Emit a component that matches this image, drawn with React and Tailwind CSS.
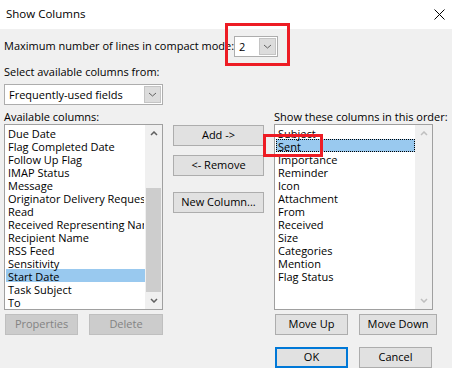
import React from "react";

const FONT = { fontFamily: "'Open Sans', 'Noto Sans', sans-serif" };

function Chevron({ dir = "down", color = "#606060", w = 8, h = 5, sw = 1.5 }) {
  const d = dir === "up" ? `M1 ${h - 1} L${w / 2} 1 L${w - 1} ${h - 1}` : `M1 1 L${w / 2} ${h - 1} L${w - 1} 1`;
  return (
    <svg width={w} height={h} viewBox={`0 0 ${w} ${h}`} fill="none">
      <path d={d} stroke={color} strokeWidth={sw} />
    </svg>
  );
}

function Combo({ text, className }) {
  return (
    <div className={`flex items-center bg-white border border-[#adadad] h-[21px] p-[1px] ${className}`}>
      <span className="flex-1 pl-[3px] leading-[17px] whitespace-nowrap overflow-x-clip">{text}</span>
      <div className="w-[17px] h-[17px] bg-[#dcdcdc] border border-[#c4c4c4] flex items-center justify-center">
        <Chevron dir="down" w={9} h={5} sw={1} />
      </div>
    </div>
  );
}

function Btn({ children, className = "", disabled = false, primary = false }) {
  const cls = disabled
    ? "bg-[#cccccc] border border-[#bfbfbf] text-[#838383]"
    : primary
    ? "bg-[#e1e1e1] border-2 border-[#0078d7] text-black"
    : "bg-[#e1e1e1] border border-[#adadad] text-black";
  return (
    <div className={`h-[21px] flex items-center justify-center whitespace-nowrap ${cls} ${className}`}>
      {children}
    </div>
  );
}

function ListBox({ items, selected, focused, scroll }) {
  return (
    <div className="w-[159px] h-[186px] bg-white border border-[#a0a0a0] flex">
      <div className="flex-1 pt-[1px] pl-[1px] overflow-hidden">
        {items.map((it, i) => (
          <div
            key={it}
            className={`h-[13px] leading-[13px] pl-[1px] whitespace-nowrap overflow-x-clip border ${
              i === selected ? "bg-[#99c9ef]" : ""
            } ${i === selected && focused ? "border-dotted border-black" : "border-transparent"}`}
          >
            {it}
          </div>
        ))}
      </div>
      <div className="w-[17px] bg-[#f0f0f0] flex flex-col">
        <div className="h-[17px] flex items-center justify-center">
          <Chevron dir="up" color={scroll ? "#606060" : "#bfbfbf"} />
        </div>
        <div className="flex-1 flex flex-col justify-end">
          {scroll && <div className="h-[104px] mx-[1px] bg-[#cdcdcd]" />}
        </div>
        <div className="h-[17px] flex items-center justify-center">
          <Chevron dir="down" color={scroll ? "#606060" : "#bfbfbf"} />
        </div>
      </div>
    </div>
  );
}

const LEFT = [
  "Due Date",
  "Flag Completed Date",
  "Follow Up Flag",
  "IMAP Status",
  "Message",
  "Originator Delivery Requested",
  "Read",
  "Received Representing Name",
  "Recipient Name",
  "RSS Feed",
  "Sensitivity",
  "Start Date",
  "Task Subject",
  "To",
];

const RIGHT = [
  "Subject",
  "Sent",
  "Importance",
  "Reminder",
  "Icon",
  "Attachment",
  "From",
  "Received",
  "Size",
  "Categories",
  "Mention",
  "Flag Status",
];

export default function App() {
  return (
    <div className="relative w-[452px] h-[368px] overflow-hidden bg-[#f0f0f0] text-[11px] text-black" style={FONT}>
      <div className="h-[29px] bg-white flex items-center justify-between pl-[6px] pr-[7px] pb-[1px]">
        <span className="text-[11.5px]">Show Columns</span>
        <svg width="11" height="11" viewBox="0 0 11 11" fill="none">
          <path d="M0.5 0.5 L10.5 10.5 M10.5 0.5 L0.5 10.5" stroke="#000" strokeWidth="1" />
        </svg>
      </div>

      <div className="px-[4px]">
        <div className="flex items-center mt-[7px] h-[21px]">
          <span className="w-[230px] whitespace-nowrap">Maximum number of lines in compact mode:</span>
          <Combo text="2" className="w-[44px]" />
        </div>

        <div className="mt-[7px] h-[15px] leading-[15px]">Select available columns from:</div>

        <Combo text="Frequently-used fields" className="w-[159px] mt-[5px]" />

        <div className="flex mt-[4px]">
          <div className="w-[159px] flex flex-col">
            <div className="h-[15px] leading-[15px]">Available columns:</div>
            <ListBox items={LEFT} selected={11} scroll />
            <div className="flex justify-between mt-[4px] pl-[1px]">
              <Btn disabled className="w-[73px]">Properties</Btn>
              <Btn disabled className="w-[74px]">Delete</Btn>
            </div>
          </div>

          <div className="w-[91px] ml-[10px] flex flex-col pt-[16px]">
            <Btn>Add -&gt;</Btn>
            <Btn className="mt-[9px]">&lt;- Remove</Btn>
            <Btn className="mt-[16px]">New Column...</Btn>
          </div>

          <div className="w-[163px] ml-[10px] flex flex-col">
            <div className="h-[15px] leading-[15px] whitespace-nowrap">Show these columns in this order:</div>
            <ListBox items={RIGHT} selected={1} focused />
            <div className="flex justify-between mt-[4px] pl-[1px]">
              <Btn className="w-[73px]">Move Up</Btn>
              <Btn className="w-[78px]">Move Down</Btn>
            </div>
            <div className="flex mt-[12px] pl-[1px]">
              <Btn primary className="w-[73px]">OK</Btn>
              <Btn className="w-[73px] ml-[11px]">Cancel</Btn>
            </div>
          </div>
        </div>
      </div>

      <div className="absolute left-[225px] top-[23px] w-[65px] h-[43px] border-[3px] border-[#ed1c24]" />
      <div className="absolute left-[263px] top-[134px] w-[60px] h-[23px] border-[3px] border-[#ed1c24]" />
    </div>
  );
}
